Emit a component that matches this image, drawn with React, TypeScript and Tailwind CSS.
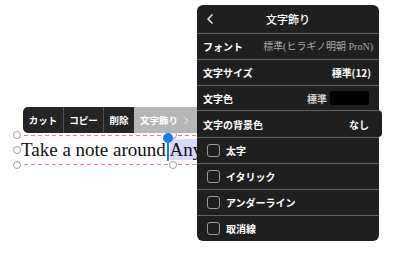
import { ChevronLeft, ChevronRight } from 'lucide-react';

const jp = { fontFamily: '"Noto Sans CJK JP", "Noto Sans", sans-serif' };

function Handle({ className }: { className: string }) {
  return <span className={`absolute w-[8px] h-[8px] rounded-full border border-[#a0a0a0] bg-white ${className}`} />;
}

function Dashes() {
  return <div className="h-px bg-[repeating-linear-gradient(90deg,#e47f7f_0_4px,transparent_4px_7px)]" />;
}

function CheckRow({ label }: { label: string }) {
  return (
    <div className="h-[26px] border-t border-[#626262] flex items-center pl-[10px] gap-[6px]">
      <span className="w-[13px] h-[13px] rounded-[3px] border border-[#9a9a9a]" />
      <span className="text-[10px] font-bold text-white">{label}</span>
    </div>
  );
}

export default function App() {
  return (
    <div className="relative w-[400px] h-[253px] bg-white overflow-hidden" style={jp}>
      {/* text box being edited */}
      <div className="pt-[135px] pl-[17px]">
        <div className="relative h-[30px] w-[250px] flex flex-col justify-between">
          <Dashes />
          <Dashes />
          <Handle className="-left-[4px] -top-[4px]" />
          <Handle className="-left-[4px] top-[11px]" />
          <Handle className="-left-[4px] -bottom-[4px]" />
          <Handle className="left-[152px] -top-[4px]" />
          <Handle className="left-[152px] -bottom-[4px]" />
          <div
            className="absolute left-[4px] top-[3px] text-[19px] leading-[24px] text-[#111] whitespace-nowrap"
            style={{ fontFamily: '"Liberation Serif", serif' }}
          >
            Take a note around <span className="bg-[#d9d9fb]">Any</span>
          </div>
          <span className="absolute left-[150px] top-[2px] w-[2px] h-[24px] bg-[#1a7cf5]" />
          <span className="absolute left-[146px] -top-[2px] w-[10px] h-[10px] rounded-full bg-[#1a7cf5]" />
        </div>
      </div>

      {/* edit menu */}
      <div className="absolute left-[23px] top-[107px] h-[26px] flex rounded-l-[5px] overflow-hidden text-[9.5px] font-bold text-white">
        <div className="w-[40px] bg-[#242424] flex items-center justify-center">カット</div>
        <div className="w-[40px] bg-[#242424] border-l border-[#505050] flex items-center justify-center">コピー</div>
        <div className="w-[31px] bg-[#242424] border-l border-[#505050] flex items-center justify-center">削除</div>
        <div className="w-[70px] bg-[#b6b6b6] flex items-center pl-[6px] gap-[3px]">
          文字飾り
          <ChevronRight size={11} strokeWidth={2} />
        </div>
      </div>

      {/* text decoration panel */}
      <div className="absolute left-[197px] top-[5px] w-[182px] rounded-[6px] bg-[#1f1f1f] text-white">
        <div className="h-[28px] relative flex items-center justify-center">
          <ChevronLeft size={16} strokeWidth={2.5} className="absolute left-[5px] text-[#e0e0e0]" />
          <span className="text-[11px] font-medium">文字飾り</span>
        </div>
        <div className="h-[26px] border-t border-[#626262] flex items-center justify-between px-[6px]">
          <span className="text-[10px] font-bold">フォント</span>
          <span className="text-[10px] text-[#a9a9a9]" style={{ fontFamily: '"Liberation Serif", "Noto Sans CJK JP", serif' }}>
            標準(ヒラギノ明朝 ProN)
          </span>
        </div>
        <div className="h-[26px] border-t border-[#626262] flex items-center justify-between pl-[6px] pr-[8px]">
          <span className="text-[10px] font-bold">文字サイズ</span>
          <span className="text-[10px] font-bold">標準(12)</span>
        </div>
        <div className="h-[25px] border-t border-[#626262] flex items-center justify-between pl-[6px] pr-[10px]">
          <span className="text-[10px] font-bold">文字色</span>
          <div className="flex items-center gap-[3px]">
            <span className="text-[10px] font-bold text-[#cfcfcf]">標準</span>
            <span className="w-[39px] h-[14px] rounded-[2px] bg-black" />
          </div>
        </div>
        <div className="h-[27px] -mr-[3px] border-t border-[#626262] rounded-r-[4px] bg-[#1f1f1f] flex items-center justify-between pl-[6px] pr-[13px]">
          <span className="text-[10px] font-bold">文字の背景色</span>
          <span className="text-[10px] font-bold">なし</span>
        </div>
        <CheckRow label="太字" />
        <CheckRow label="イタリック" />
        <CheckRow label="アンダーライン" />
        <CheckRow label="取消線" />
      </div>
    </div>
  );
}
